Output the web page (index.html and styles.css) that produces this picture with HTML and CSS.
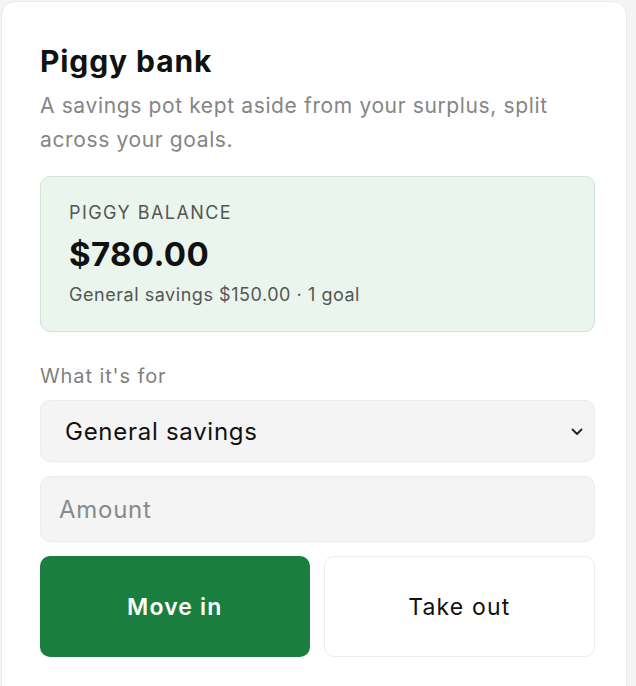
FILE: index.html
```html
<!DOCTYPE html>
<html lang="en">
<head>
    <meta charset="UTF-8">
    <meta name="viewport" content="width=device-width, initial-scale=1.0">
    <title>Piggy bank</title>
    <link rel="stylesheet" href="styles.css">
</head>
<body>
    <div class="card">
        <h1>Piggy bank</h1>
        <p class="intro">A savings pot kept aside from your surplus, split across your goals.</p>

        <div class="balance">
            <div class="balance-label">PIGGY BALANCE</div>
            <div class="balance-amount">$780.00</div>
            <div class="balance-note">General savings $150.00 &middot; 1 goal</div>
        </div>

        <label class="field-label" for="purpose">What it's for</label>
        <div class="select-wrap">
            <select id="purpose" class="field">
                <option>General savings</option>
            </select>
            <svg class="chevron" width="12" height="8" viewBox="0 0 12 8">
                <path d="M1.5 1.5 L6 6 L10.5 1.5" fill="none" stroke="#222" stroke-width="1.8" stroke-linecap="round" stroke-linejoin="round"/>
            </svg>
        </div>
        <input type="text" class="field amount" placeholder="Amount">

        <div class="actions">
            <button class="btn btn-primary">Move in</button>
            <button class="btn btn-secondary">Take out</button>
        </div>
    </div>
</body>
</html>
```

FILE: styles.css
```css
html, body {
    margin: 0;
    padding: 0;
}
body {
    font-family: Inter, 'Noto Sans', Arial, sans-serif;
    background: #f4f4f4;
    color: #111;
}
.card {
    margin: 1px 0 0 1px;
    width: 626px;
    box-sizing: border-box;
    min-height: 720px;
    background: #fff;
    border: 1px solid #ebebeb;
    border-radius: 14px;
    padding: 41px 31px 0 38px;
}
h1 {
    margin: 0;
    font-size: 30px;
    line-height: 36px;
    font-weight: 700;
    letter-spacing: 0.03em;
    color: #111;
}
.intro {
    margin: 10px 0 0;
    font-size: 21px;
    line-height: 34px;
    letter-spacing: 0.03em;
    color: #858585;
}
.balance {
    margin-top: 19px;
    background: #eaf5ed;
    border: 1px solid #cfe4d6;
    border-radius: 10px;
    padding: 24px 28px 24px 28px;
}
.balance-label {
    font-size: 18px;
    line-height: 24px;
    letter-spacing: 0.08em;
    color: #555;
}
.balance-amount {
    margin-top: 9px;
    font-size: 33px;
    line-height: 40px;
    font-weight: 700;
    letter-spacing: 0.01em;
    color: #111;
}
.balance-note {
    margin-top: 9px;
    font-size: 18px;
    line-height: 24px;
    letter-spacing: 0.03em;
    color: #555;
}
.field-label {
    display: block;
    margin-top: 31px;
    font-size: 20px;
    line-height: 26px;
    letter-spacing: 0.045em;
    color: #7f7f7f;
}
.select-wrap {
    position: relative;
    margin-top: 11px;
}
.field {
    display: block;
    width: 100%;
    box-sizing: border-box;
    font-family: inherit;
    font-size: 24px;
    letter-spacing: 0.03em;
    background: #f4f4f4;
    border: 1px solid #ececec;
    border-radius: 10px;
    color: #111;
    outline: none;
}
select.field {
    height: 62px;
    padding: 0 40px 0 24px;
    -webkit-appearance: none;
    appearance: none;
}
.chevron {
    position: absolute;
    right: 12px;
    top: 28px;
}
.amount {
    margin-top: 14px;
    height: 66px;
    padding: 0 18px;
}
.amount::placeholder {
    color: #8a8a8a;
}
.actions {
    display: flex;
    gap: 14px;
    margin-top: 14px;
}
.btn {
    flex: 1;
    height: 101px;
    font-family: inherit;
    font-size: 23px;
    letter-spacing: 0.05em;
    border-radius: 10px;
    cursor: pointer;
}
.btn-primary {
    background: #1a7f3e;
    color: #fff;
    border: none;
    font-weight: 600;
}
.btn-secondary {
    background: #fff;
    color: #111;
    border: 1px solid #ececec;
}
```
